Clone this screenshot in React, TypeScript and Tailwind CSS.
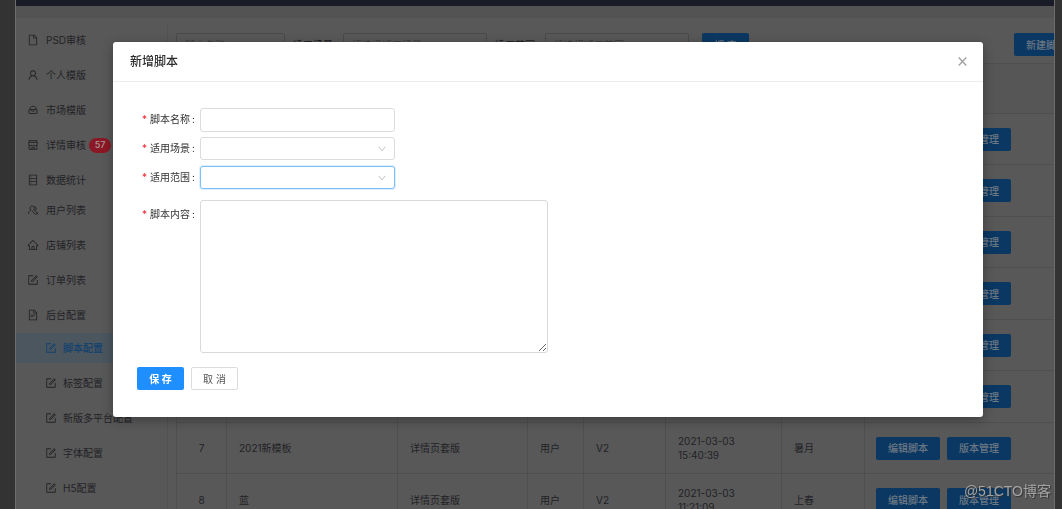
import React from "react";
import {
  AiOutlineDatabase,
  AiOutlineFile,
  AiOutlineFileText,
  AiOutlineForm,
  AiOutlineHome,
  AiOutlineShop,
  AiOutlineUser,
} from "react-icons/ai";

function BagIcon() {
  return (
    <svg viewBox="0 0 24 24" className="size-3" fill="none" stroke="currentColor" strokeWidth="1.8">
      <path d="M5.500 11C5.500 6.500 8 4.500 12 4.500S18.500 6.500 18.500 11" />
      <rect x="4" y="11" width="16" height="8" rx="1" />
      <path d="M8.500 11v1c0 1.500 1.500 2.500 3.500 2.500s3.500-1 3.500-2.500v-1" />
    </svg>
  );
}

function UsersIcon() {
  return (
    <svg viewBox="0 0 24 24" className="size-3" fill="none" stroke="currentColor" strokeWidth="1.8">
      <path d="M7.500 12C5.500 10.500 5 5 9.500 4s6.500 3.500 4.500 7l-2 2" />
      <path d="M3 20c0-4 2-6.500 5.500-7.500" />
      <path d="M15 5c3.500.5 4.500 5 2 7.500-1 1-2 1-2 1 3.500 1 5.500 3 6.500 6.500" />
      <path d="M10.500 14.500 16 20M16.500 20h4.500" />
    </svg>
  );
}

type Item = { label: string; icon: React.ReactNode; badge?: string; active?: boolean };

const reviewItems: Item[] = [
  { label: "PSD审核", icon: <AiOutlineFile size={12} /> },
  { label: "个人模版", icon: <AiOutlineUser size={12} /> },
  { label: "市场模版", icon: <BagIcon /> },
  { label: "详情审核", icon: <AiOutlineShop size={12} />, badge: "57" },
  { label: "数据统计", icon: <AiOutlineDatabase size={12} /> },
];

const listItems: Item[] = [
  { label: "用户列表", icon: <UsersIcon /> },
  { label: "店铺列表", icon: <AiOutlineHome size={12} /> },
  { label: "订单列表", icon: <AiOutlineForm size={12} /> },
  { label: "后台配置", icon: <AiOutlineFileText size={12} /> },
];

const configItems: Item[] = [
  { label: "脚本配置", icon: <AiOutlineForm size={12} />, active: true },
  { label: "标签配置", icon: <AiOutlineForm size={12} /> },
  { label: "新版多平台配置", icon: <AiOutlineForm size={12} /> },
  { label: "字体配置", icon: <AiOutlineForm size={12} /> },
  { label: "H5配置", icon: <AiOutlineForm size={12} /> },
];

function Menu({ items, nested = false }: { items: Item[]; nested?: boolean }) {
  return (
    <ul className="flex flex-col gap-[5px]">
      {items.map((item) => (
        <li key={item.label}>
          <a
            href="#"
            className={`flex h-[30px] items-center whitespace-nowrap ${nested ? "gap-[6px] pl-[29px]" : "gap-[7px] pl-[11px]"} ${
              item.active ? "bg-[#4b565f] font-medium text-[#11416f]" : "text-[#222226]"
            }`}
          >
            {item.icon}
            <span>{item.label}</span>
            {item.badge && (
              <span className="-ml-1 flex h-[15px] w-[22px] items-center justify-center rounded-full bg-[#8c1725] text-[9px] font-medium text-[#a99a9c]">
                {item.badge}
              </span>
            )}
          </a>
        </li>
      ))}
    </ul>
  );
}

type Row = { name: string; date: string; time: string; author: string };

const rows: Row[] = [
  { name: "模板一", date: "2021-03-09", time: "10:12:08", author: "上春" },
  { name: "模板二", date: "2021-03-08", time: "16:31:40", author: "暑月" },
  { name: "模板三", date: "2021-03-08", time: "11:05:27", author: "上春" },
  { name: "模板四", date: "2021-03-05", time: "17:48:12", author: "暑月" },
  { name: "模板五", date: "2021-03-05", time: "14:20:55", author: "上春" },
  { name: "模板六", date: "2021-03-04", time: "09:36:18", author: "暑月" },
  { name: "2021新模板", date: "2021-03-03", time: "15:40:39", author: "暑月" },
  { name: "蓝", date: "2021-03-03", time: "11:21:09", author: "上春" },
];

const cell = "border-r border-b border-[#4f4f4f] px-3";
const darkButton = "h-[23px] rounded-[2px] bg-[#0b3862] font-medium whitespace-nowrap text-[#6b7783]";

function ScriptTable() {
  return (
    <table className="w-full table-fixed border-separate border-spacing-0 border-t border-l border-[#4f4f4f] text-left">
      <colgroup>
        <col className="w-[50px]" />
        <col className="w-[171px]" />
        <col className="w-[130px]" />
        <col className="w-[56px]" />
        <col className="w-[82px]" />
        <col className="w-[116px]" />
        <col className="w-[83px]" />
        <col />
      </colgroup>
      <thead>
        <tr className="h-[50px] bg-[#565656]">
          {["序号", "脚本名称", "适用场景", "范围", "版本", "更新时间", "更新人", "操作"].map((title) => (
            <th key={title} className={`${cell} font-medium`}>
              {title}
            </th>
          ))}
        </tr>
      </thead>
      <tbody>
        {rows.map((row, i) => (
          <tr key={row.name} className="odd:h-[51px] even:h-[52px]">
            <td className={`${cell} text-center`}>{i + 1}</td>
            <td className={cell}>{row.name}</td>
            <td className={cell}>详情页套版</td>
            <td className={cell}>用户</td>
            <td className={cell}>V2</td>
            <td className={`${cell} leading-[14px]`}>
              {row.date}
              <br />
              {row.time}
            </td>
            <td className={cell}>{row.author}</td>
            <td className="border-b border-[#4f4f4f] pl-[11px]">
              <div className="flex gap-[7px]">
                <button className={`${darkButton} w-16`}>编辑脚本</button>
                <button className={`${darkButton} w-16`}>版本管理</button>
              </div>
            </td>
          </tr>
        ))}
      </tbody>
    </table>
  );
}

function Filters() {
  const field = "h-[23px] rounded-[2px] border border-[#4a4a4a] bg-transparent px-2 placeholder:text-[#3c3c3c]";
  return (
    <div className="mb-[7px] flex items-center justify-between">
      <div className="flex items-center whitespace-nowrap">
        <input aria-label="脚本名称" placeholder="脚本名称" className={`${field} w-[109px]`} />
        <label htmlFor="filter-scene" className="ml-2 w-[50px] font-medium">
          适用场景
        </label>
        <select id="filter-scene" className={`${field} w-36 appearance-none text-[#3c3c3c]`}>
          <option>请选择适用场景</option>
        </select>
        <label htmlFor="filter-range" className="ml-2 w-[50px] font-medium">
          适用范围
        </label>
        <select id="filter-range" className={`${field} w-36 appearance-none text-[#3c3c3c]`}>
          <option>请选择适用范围</option>
        </select>
        <button className={`${darkButton} ml-[13px] w-[47px]`}>搜 索</button>
      </div>
      <button className={`${darkButton} w-16`}>新建脚本</button>
    </div>
  );
}

function Chevron() {
  return (
    <svg
      viewBox="0 0 8 8"
      className="pointer-events-none absolute top-2 right-[9px] size-2"
      fill="none"
      stroke="#c4c4c4"
    >
      <path d="M0.800 1.800 4 6 7.200 1.800" />
    </svg>
  );
}

function FieldLabel({ htmlFor, children }: { htmlFor: string; children: React.ReactNode }) {
  return (
    <label htmlFor={htmlFor} className="flex h-[22px] w-[58px] shrink-0 items-center whitespace-nowrap text-[#333]">
      <span className="w-2 text-[#f5222d]">*</span>
      {children}
      <span className="ml-0.5">:</span>
    </label>
  );
}

function ScriptDialog() {
  const box = "w-full rounded-[3px] border bg-white px-2 outline-none";
  return (
    <section
      role="dialog"
      aria-labelledby="dialog-title"
      className="w-[870px] rounded-[3px] bg-white shadow-[0_3px_12px_rgba(0,0,0,0.3)]"
    >
      <header className="flex h-10 items-center justify-between border-b border-[#ececec] pr-4 pl-[17px]">
        <h2 id="dialog-title" className="text-xs font-medium text-[#2b2b2b]">
          新增脚本
        </h2>
        <button aria-label="关闭" className="text-[#a0a0a0]">
          <svg viewBox="0 0 9 9" className="size-[9px]" fill="none" stroke="currentColor" strokeWidth="1.3">
            <path d="M0.700 0.500 8.300 8.500M8.300 0.500 0.700 8.500" />
          </svg>
        </button>
      </header>
      <form className="px-6 pt-[26px] pb-[27px]" onSubmit={(e) => e.preventDefault()}>
        <div className="flex flex-col gap-[5px] pl-[5px]">
          <div className="flex h-6">
            <FieldLabel htmlFor="name">脚本名称</FieldLabel>
            <div className="w-[195px]">
              <input id="name" className={`${box} h-6 border-[#dcdcdc]`} />
            </div>
          </div>
          <div className="flex h-6">
            <FieldLabel htmlFor="scene">适用场景</FieldLabel>
            <div className="relative w-[195px]">
              <select id="scene" className={`${box} h-[23px] appearance-none border-[#dcdcdc]`} />
              <Chevron />
            </div>
          </div>
          <div className="flex h-6">
            <FieldLabel htmlFor="range">适用范围</FieldLabel>
            <div className="relative w-[195px]">
              <select
                id="range"
                className={`${box} h-[23px] appearance-none border-[#7cc0fb] shadow-[0_0_0_1px_rgba(24,144,255,0.15)]`}
              />
              <Chevron />
            </div>
          </div>
          <div className="mt-[5px] flex">
            <div className="pt-[3px]">
              <FieldLabel htmlFor="content">脚本内容</FieldLabel>
            </div>
            <textarea
              id="content"
              className="block h-[153px] w-[348px] rounded-[3px] border border-[#d9d9d9] outline-none"
            />
          </div>
        </div>
        <div className="mt-[14px] flex gap-[7px]">
          <button className="h-[23px] w-[47px] rounded-[2px] bg-[#1f8fff] font-bold text-white">保 存</button>
          <button className="h-[23px] w-[47px] rounded-[2px] border border-[#dcdcdc] text-[#555]">取 消</button>
        </div>
      </form>
    </section>
  );
}

export default function App() {
  return (
    <div className="h-screen overflow-hidden bg-[#333] pr-[7px] pl-[15px] font-[Inter,'Noto_Sans_CJK_SC',sans-serif] text-[10px] leading-[14px] text-[#222226]">
      <div className="flex h-full flex-col overflow-hidden border-x border-[#6c6c6c] bg-[#585858]">
        <div className="h-1.5 shrink-0 bg-[#191c26]" />
        <div className="h-3 shrink-0 bg-[#535354]" />
        <div className="flex min-h-0 flex-1">
          <nav className="mt-[7px] flex w-[152px] shrink-0 flex-col border-r border-[#515151]">
            <Menu items={reviewItems} />
            <div className="mb-[3px]">
              <Menu items={listItems} />
            </div>
            <Menu items={configItems} nested />
          </nav>
          <main className="min-w-0 flex-1 overflow-hidden pt-[15px] pl-2">
            <div className="min-w-[902px]">
              <Filters />
              <ScriptTable />
            </div>
          </main>
        </div>
      </div>
      <div className="fixed inset-0 flex items-start justify-center pt-[42px] pl-[34px]">
        <ScriptDialog />
      </div>
      <div className="fixed right-[11px] bottom-2 font-['Liberation_Sans','Noto_Sans_CJK_SC',sans-serif] text-sm text-[#a4a4a4] [text-shadow:1px_1px_1px_#333]">
        @51CTO博客
      </div>
    </div>
  );
}
